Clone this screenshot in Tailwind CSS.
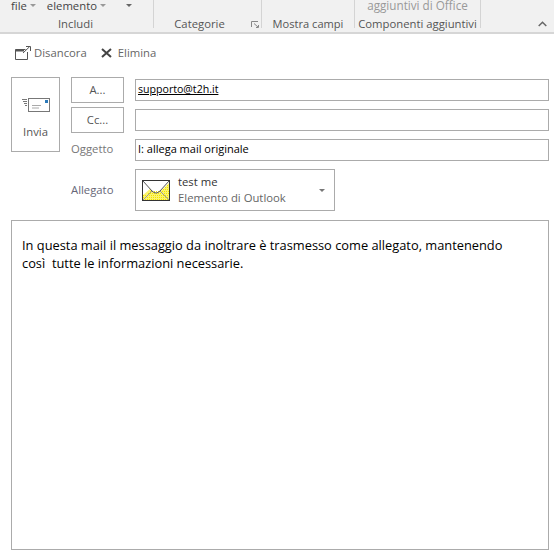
<!DOCTYPE html>
<html lang="en">
<head>
    <meta charset="UTF-8">
    <title>Messaggio</title>
    <script src="https://cdn.jsdelivr.net/npm/@tailwindcss/browser@4"></script>
</head>
<body class="w-[554px] h-[556px] overflow-hidden bg-white font-['Open_Sans','Noto_Sans',sans-serif] text-[11.3px] text-[#444]">
    <!-- Ribbon -->
    <div class="relative flex h-[34px] bg-[#f1f1f1] border-b-2 border-[#d6d6d6] text-center leading-[16px]">
        <div class="w-[154px] h-[28px] border-r border-[#d4d4d4] shrink-0">
            <div class="flex h-[11px] items-center pl-[11px] leading-[11px] whitespace-nowrap text-[#444]">
                <span>file</span><span class="ml-[3px] border-x-[3px] border-t-[3px] border-x-transparent border-t-[#999]"></span>
                <span class="ml-[11px]">elemento</span><span class="ml-[3px] border-x-[3px] border-t-[3px] border-x-transparent border-t-[#999]"></span>
                <span class="ml-[20px] border-x-[3px] border-t-[3px] border-x-transparent border-t-[#666]"></span>
            </div>
            <div class="mt-[5px] text-[#555] pr-[2px]">Includi</div>
        </div>
        <div class="relative w-[108px] h-[28px] border-r border-[#d4d4d4] shrink-0 pt-[16px] pr-[16px] text-[#555]">
            Categorie
            <svg class="absolute right-[2px] top-[21px]" width="8" height="7" viewBox="0 0 8 7" fill="none" stroke="#888" stroke-width="1"><path d="M0.5 6V0.5H7M3 2.5L7 6M5 6.500H7.500V4"/></svg>
        </div>
        <div class="w-[93px] h-[28px] border-r border-[#d4d4d4] shrink-0 pt-[16px] whitespace-nowrap text-[11.1px] text-[#555]">Mostra campi</div>
        <div class="w-[126px] h-[28px] border-r border-[#d4d4d4] shrink-0 whitespace-nowrap text-[#555]">
            <div class="h-[11px] flex items-center justify-center leading-[11px] text-[11.7px] text-[#999]">aggiuntivi di Office</div>
            <div class="mt-[5px]">Componenti aggiuntivi</div>
        </div>
        <svg class="absolute left-[538px] top-[21px]" width="9" height="6" viewBox="0 0 9 6" fill="none" stroke="#666" stroke-width="1.5"><path d="M0.7 5L4.500 1.300L8.300 5"/></svg>
    </div>

    <!-- Toolbar -->
    <div class="flex items-center h-[43px] pb-[5px] pl-[15px] text-[#666]">
        <svg width="16" height="14" viewBox="0 0 16 14" fill="none" stroke="#555"><path d="M10.500 3.500H0.500V13.500H12.500V6"/><path d="M0.500 4.500H9" stroke-width="2"/><path d="M8 7L14.500 0.800M11 0.500H15.500V5"/></svg>
        <span class="ml-[3px]">Disancora</span>
        <svg class="ml-[14px]" width="11" height="10" viewBox="0 0 11 10" fill="none" stroke="#444" stroke-width="2"><path d="M1 1L10 9M10 1L1 9"/></svg>
        <span class="ml-[6px]">Elimina</span>
    </div>

    <!-- Form -->
    <div class="flex pl-[11px] pr-[5px]">
        <div class="flex flex-col items-center w-[49px] h-[75px] border border-[#ababab] pt-[20px] shrink-0">
            <svg width="28" height="14" viewBox="0 0 28 14" fill="none"><path d="M0 1.500H5M1 3.500H5M2 5.500H5M3 7.500H5" stroke="#777"/><rect x="6.500" y="0.500" width="21" height="13" fill="#fff" stroke="#777"/><rect x="23" y="2" width="3" height="3" fill="#2b79b9"/><path d="M10 7.500H19M10 10H17" stroke="#aaa"/></svg>
            <span class="mt-[12px] leading-[16px] text-[#555]">Invia</span>
        </div>
        <div class="ml-[11px] w-[53px] shrink-0">
            <div class="flex items-center justify-center h-[26px] border border-[#ababab] text-[#555]">A...</div>
            <div class="flex items-center justify-center h-[26px] mt-[4px] border border-[#ababab] text-[#555]">Cc...</div>
            <div class="mt-[8px] leading-[16px] text-[#777]">Oggetto</div>
        </div>
        <div class="ml-[11px] flex-1 pt-[2px]">
            <div class="flex items-center h-[22px] border border-[#ababab] pl-[2px] text-[10.6px] text-black"><span class="underline">supporto@t2h.it</span></div>
            <div class="h-[22px] mt-[8px] border border-[#ababab]"></div>
            <div class="flex items-center h-[22px] mt-[8px] border border-[#ababab] pl-[2px] pb-[1px] text-[11px] font-medium text-black">I: allega mail originale</div>
        </div>
    </div>

    <!-- Attachment -->
    <div class="flex items-center mt-[8px] pl-[71px]">
        <span class="w-[64px] text-[#667]">Allegato</span>
        <div class="flex items-center w-[200px] h-[42px] border border-[#ababab] pl-[6px]">
            <svg width="28" height="21" viewBox="0 0 28 21" fill="none">
                <rect x="0.500" y="0.500" width="27" height="20" fill="#fff" stroke="#333"/>
                <path d="M1 20V15L8 9L13 13H16L21 9L27 3V20Z" fill="#fbf46e"/>
                <path d="M1 19.500H27M1 17.500H27M1 15.500H27M6 13.500H27M8 11.500H27M21 9.500H27M23 7.500H27M25 5.500H27" stroke="#f2e200" stroke-dasharray="1 1"/>
                <path d="M1 1L10 11Q14 15 18 11L27 1" stroke="#555"/>
                <path d="M1 20L10 11M27 20L18 11" stroke="#999"/>
            </svg>
            <div class="ml-[8px] flex-1 leading-[16px]">
                <div class="text-[#333]">test me</div>
                <div class="text-[#666]">Elemento di Outlook</div>
            </div>
            <span class="mr-[9px] border-x-[3px] border-t-[3px] border-x-transparent border-t-[#777]"></span>
        </div>
    </div>

    <!-- Body -->
    <div class="mt-[9px] ml-[11px] w-[538px] h-[330px] border border-[#ababab] pl-[10px] pt-[15px] text-[12.84px] leading-[18px] text-black whitespace-pre">In questa mail il messaggio da inoltrare è trasmesso come allegato, mantenendo
così  tutte le informazioni necessarie.</div>
</body>
</html>
